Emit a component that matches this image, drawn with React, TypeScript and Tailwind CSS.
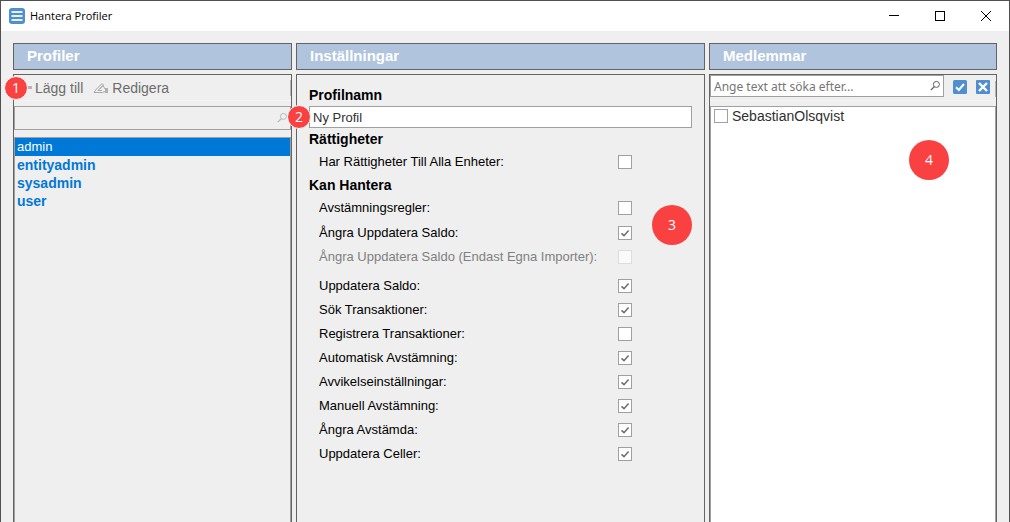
import { useState } from "react";

type Permission = {
  id: string;
  label: string;
  checked?: boolean;
  disabled?: boolean;
};

const profiles = ["admin", "entityadmin", "sysadmin", "user"];

const rights: Permission[] = [{ id: "all-entities", label: "Har Rättigheter Till Alla Enheter:" }];

const rules: Permission[] = [{ id: "rules", label: "Avstämningsregler:" }];

const undo: Permission[] = [
  { id: "undo-balance", label: "Ångra Uppdatera Saldo:", checked: true },
  { id: "undo-balance-own", label: "Ångra Uppdatera Saldo (Endast Egna Importer):", disabled: true },
];

const manage: Permission[] = [
  { id: "balance", label: "Uppdatera Saldo:", checked: true },
  { id: "search", label: "Sök Transaktioner:", checked: true },
  { id: "register", label: "Registrera Transaktioner:" },
  { id: "auto", label: "Automatisk Avstämning:", checked: true },
  { id: "deviation", label: "Avvikelseinställningar:", checked: true },
  { id: "manual", label: "Manuell Avstämning:", checked: true },
  { id: "undo-matched", label: "Ångra Avstämda:", checked: true },
  { id: "cells", label: "Uppdatera Celler:", checked: true },
];

function Checkbox({ id, checked, disabled }: { id: string; checked?: boolean; disabled?: boolean }) {
  return (
    <span className="grid h-3.5 w-3.5 shrink-0">
      <input
        id={id}
        type="checkbox"
        defaultChecked={checked}
        disabled={disabled}
        className="peer col-start-1 row-start-1 h-3.5 w-3.5 appearance-none border border-[#a0a0a0] bg-white disabled:border-[#dddddd] disabled:bg-[#fafafa]"
      />
      <svg
        viewBox="0 0 14 14"
        className="pointer-events-none invisible col-start-1 row-start-1 h-3.5 w-3.5 peer-checked:visible"
        fill="none"
        stroke="#707070"
        strokeWidth="1.6"
      >
        <path d="M3.5 7.3 L6 9.7 L10.6 4.4" />
      </svg>
    </span>
  );
}

function PermissionRows({ items }: { items: Permission[] }) {
  return (
    <>
      {items.map((p) => (
        <div key={p.id} className="flex h-6 items-center pl-2.5">
          <label htmlFor={p.id} className={p.disabled ? "w-[299px] text-[#808080]" : "w-[299px]"}>
            {p.label}
          </label>
          <Checkbox id={p.id} checked={p.checked} disabled={p.disabled} />
        </div>
      ))}
    </>
  );
}

function SearchIcon({ className }: { className: string }) {
  return (
    <svg viewBox="0 0 12 12" className={className} fill="none" stroke="currentColor">
      <circle cx="7.4" cy="4.4" r="3" strokeWidth="1" />
      <path d="M5.2 6.7 L1.8 10.1" strokeWidth="1.3" />
    </svg>
  );
}

function PanelTitle({ children }: { children: string }) {
  return (
    <h2 className="flex h-[27px] items-center border border-[#646464] bg-[#b0c4de] px-[13px] text-[15px] font-bold text-white">
      {children}
    </h2>
  );
}

export default function App() {
  const [selected, setSelected] = useState("admin");

  return (
    <div className="flex min-h-screen flex-col border-x border-t border-[#505052] bg-[#efefef] font-['Liberation_Sans',Arial,sans-serif] text-[13px] text-black">
      <header className="flex h-[30px] items-center bg-white pl-2">
        <svg viewBox="0 0 16 16" className="h-4 w-4">
          <rect width="16" height="16" rx="3" fill="#4f8fd0" />
          <path d="M2.5 4 H13.5 M2.5 8 H13.5 M2.5 12 H13.5" stroke="#e6f0fa" strokeWidth="2" />
        </svg>
        <h1 className="flex-1 pl-[5px] font-['Open_Sans','Noto_Sans',sans-serif] text-[11px]">Hantera Profiler</h1>
        <button aria-label="Minimera" className="flex h-full w-[46px] items-center justify-center">
          <svg viewBox="0 0 10 10" className="h-2.5 w-2.5" stroke="black">
            <path d="M0 4.5 H10" />
          </svg>
        </button>
        <button aria-label="Maximera" className="flex h-full w-[46px] items-center justify-center">
          <svg viewBox="0 0 10 10" className="h-2.5 w-2.5" fill="none" stroke="black">
            <rect x="0.5" y="0.5" width="9" height="9" />
          </svg>
        </button>
        <button aria-label="Stäng" className="flex h-full w-[46px] items-center justify-center">
          <svg viewBox="0 0 10 10" className="h-2.5 w-2.5" stroke="black">
            <path d="M0 0 L10 10 M10 0 L0 10" />
          </svg>
        </button>
      </header>

      <main className="grid flex-1 grid-cols-[279fr_409fr_288fr] gap-x-1 px-3 pt-3">
        <section className="flex flex-col gap-1">
          <PanelTitle>Profiler</PanelTitle>
          <div className="relative flex flex-1 flex-col border-x border-t border-[#646464]">
            <div className="flex h-[26px] items-center border-b border-[#f4f4f4] pl-3.5 text-sm text-[#6d6d6d]">
              <button className="flex items-center gap-[3px]">
                <span className="h-[3px] w-1 bg-[#b5b5b5]" />
                Lägg till
              </button>
              <button className="ml-2.5 flex items-center gap-[3px]">
                <svg viewBox="0 0 16 14" className="h-3.5 w-4" fill="none" stroke="#a8a8a8">
                  <path d="M1 11.5 L3.5 8 L9 2.5 L10.5 4 L5 9.5 M6.5 8 L10 4.5 L12 8 M1 11.5 H9.5 L12 10.5 M5 9.5 H9" />
                  <path d="M12 7 H15 V12 H12 Z" fill="#b0b0b0" stroke="none" />
                </svg>
                Redigera
              </button>
              <span className="ml-auto h-4 w-px bg-[#b5b5b5]" />
            </div>
            <div className="mt-[5px] flex h-6 items-center border border-[#a0a0a0] pr-0.5">
              <input aria-label="Sök profil" className="h-full min-w-0 flex-1 bg-transparent px-1 outline-none" />
              <SearchIcon className="h-3 w-3 text-[#b8b8b8]" />
            </div>
            <ul className="mt-[7px] flex-1 border-x border-t border-[#a0a0a0]">
              {profiles.map((name) => (
                <li key={name}>
                  <button
                    onClick={() => setSelected(name)}
                    className={
                      name === selected
                        ? "block h-[18px] w-full bg-[#0078d7] px-0.5 text-left leading-[18px] text-white"
                        : "block h-[18px] w-full px-0.5 text-left text-sm leading-[18px] font-bold text-[#0078d7]"
                    }
                  >
                    {name}
                  </button>
                </li>
              ))}
            </ul>
            <span className="absolute top-px -left-[10px] flex h-6 w-6 items-center justify-center rounded-full border border-white bg-[#fa4141] font-['Open_Sans',sans-serif] text-sm text-white">
              1
            </span>
          </div>
        </section>

        <section className="flex flex-col gap-1">
          <PanelTitle>Inställningar</PanelTitle>
          <div className="relative flex-1 border-x border-t border-[#646464] px-3 pt-[9px]">
            <label htmlFor="profile-name" className="block h-[22px] text-sm leading-[22px] font-bold">
              Profilnamn
            </label>
            <div className="relative">
              <input
                id="profile-name"
                defaultValue="Ny Profil"
                className="block h-[22px] w-full border border-[#a0a0a0] bg-white px-[3px] text-[#303030] outline-none"
              />
              <span className="absolute -top-px -left-[22px] flex h-6 w-6 items-center justify-center rounded-full border border-white bg-[#fa4141] font-['Open_Sans',sans-serif] text-sm text-white">
                2
              </span>
            </div>
            <h3 className="h-[22px] text-sm leading-[22px] font-bold">Rättigheter</h3>
            <PermissionRows items={rights} />
            <h3 className="h-[22px] text-sm leading-[22px] font-bold">Kan Hantera</h3>
            <PermissionRows items={rules} />
            <div className="mt-px mb-[5px]">
              <PermissionRows items={undo} />
            </div>
            <PermissionRows items={manage} />
            <span className="absolute top-[130px] right-3 flex h-10 w-10 items-center justify-center rounded-full bg-[#fa4141] font-['Open_Sans',sans-serif] text-sm text-white">
              3
            </span>
          </div>
        </section>

        <section className="flex flex-col gap-1">
          <PanelTitle>Medlemmar</PanelTitle>
          <div className="relative flex flex-1 flex-col border-x border-t border-[#646464]">
            <div className="flex h-[26px] items-start border-b border-[#f4f4f4]">
              <div className="flex h-[22px] flex-1 items-center border border-[#a0a0a0] bg-white pr-0.5">
                <input
                  aria-label="Sök medlem"
                  placeholder="Ange text att söka efter..."
                  className="h-full min-w-0 flex-1 px-[3px] font-['Noto_Sans',sans-serif] text-xs text-black outline-none placeholder:text-[#757575]"
                />
                <SearchIcon className="h-3 w-3 text-[#606060]" />
              </div>
              <div className="flex h-6 items-center gap-[9px] pl-[9px]">
                <button aria-label="Markera alla">
                  <svg viewBox="0 0 14 14" className="block h-3.5 w-3.5" fill="none">
                    <rect width="14" height="14" rx="1.5" fill="#4f8fd0" />
                    <path d="M3 7.2 L5.8 10 L11 4" stroke="white" strokeWidth="2" />
                  </svg>
                </button>
                <button aria-label="Avmarkera alla">
                  <svg viewBox="0 0 14 14" className="block h-3.5 w-3.5" fill="none">
                    <rect width="14" height="14" rx="1" fill="#4f8fd0" />
                    <path d="M3 3 L11 11 M11 3 L3 11" stroke="white" strokeWidth="2.4" />
                  </svg>
                </button>
              </div>
              <span className="mt-1.5 ml-[5px] h-4 w-px bg-[#b5b5b5]" />
            </div>
            <div className="mt-[5px] flex-1 border-x border-t border-[#a0a0a0] bg-white">
              <div className="flex h-[18px] items-center gap-1 pl-[3px] text-sm text-[#303030]">
                <Checkbox id="member" />
                <label htmlFor="member">SebastianOlsqvist</label>
              </div>
            </div>
            <span className="absolute top-[65px] right-[47px] flex h-10 w-10 items-center justify-center rounded-full bg-[#fa4141] font-['Open_Sans',sans-serif] text-sm text-white">
              4
            </span>
          </div>
        </section>
      </main>
    </div>
  );
}
